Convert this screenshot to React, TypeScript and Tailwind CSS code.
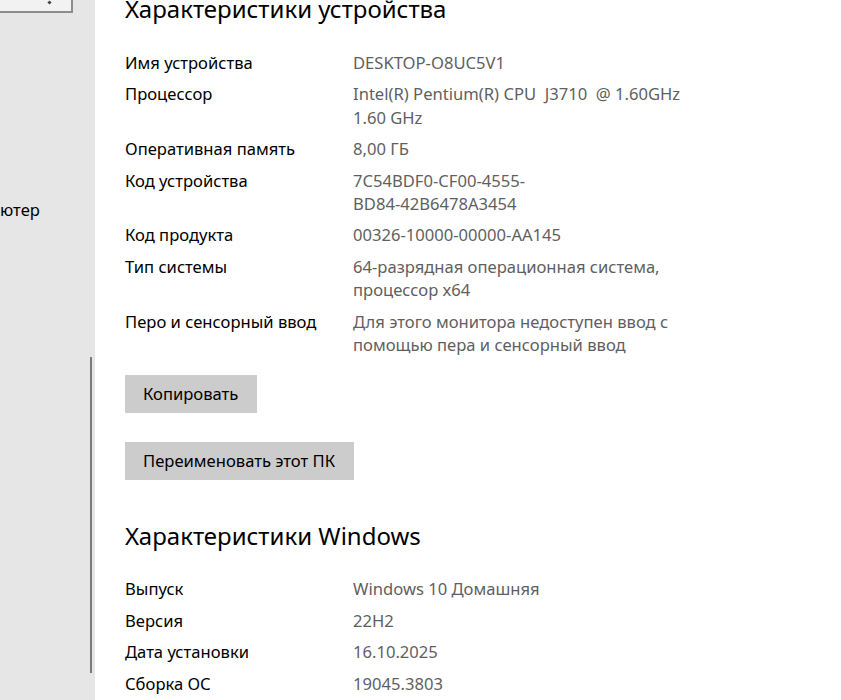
import React from "react";

const device: [string, string[]][] = [
  ["Имя устройства", ["DESKTOP-O8UC5V1"]],
  ["Процессор", ["Intel(R) Pentium(R) CPU  J3710  @ 1.60GHz", "1.60 GHz"]],
  ["Оперативная память", ["8,00 ГБ"]],
  ["Код устройства", ["7C54BDF0-CF00-4555-", "BD84-42B6478A3454"]],
  ["Код продукта", ["00326-10000-00000-AA145"]],
  ["Тип системы", ["64-разрядная операционная система,", "процессор x64"]],
  ["Перо и сенсорный ввод", ["Для этого монитора недоступен ввод с", "помощью пера и сенсорный ввод"]],
];

const windows: [string, string[]][] = [
  ["Выпуск", ["Windows 10 Домашняя"]],
  ["Версия", ["22H2"]],
  ["Дата установки", ["16.10.2025"]],
  ["Сборка ОС", ["19045.3803"]],
];

function Rows({ rows }: { rows: [string, string[]][] }) {
  return (
    <div className="flex flex-col gap-[8px]">
      {rows.map(([label, vals]) => (
        <div key={label} className="flex text-[16.6px] leading-[23.4px]">
          <div className="w-[228px] shrink-0 text-[#000]">{label}</div>
          <div className="text-[#5f5f5f] whitespace-pre">
            {vals.map((v) => (
              <div key={v}>{v}</div>
            ))}
          </div>
        </div>
      ))}
    </div>
  );
}

export default function App() {
  return (
    <div
      className="flex w-[841px] h-[700px] overflow-hidden bg-white"
      style={{ fontFamily: '"Noto Sans", "Open Sans", sans-serif' }}
    >
      <aside className="relative w-[95px] shrink-0 bg-[#e6e6e6]">
        <div className="absolute left-[-4px] top-[-30px] w-[77px] h-[43px] border-2 border-[#8c8c8c] bg-[#f2f2f2]">
          <div className="absolute left-[50px] bottom-[7px] w-[3px] h-[3px] bg-[#444] rotate-45" />
        </div>
        <div className="absolute left-[0px] top-[198px] text-[16.6px] leading-[23px] text-black">ютер</div>
        <div className="absolute left-[90px] top-[357px] w-[2px] h-[316px] bg-[#7a7a7a]" />
      </aside>
      <main className="flex-1 pl-[30px]">
        <h1 className="mt-[-7px] text-[24px] leading-[32px] font-normal text-black mb-[26px]">
          Характеристики устройства
        </h1>
        <Rows rows={device} />
        <div className="mt-[19px] flex flex-col items-start gap-[29px]">
          <button className="h-[38px] pl-[18px] pr-[19px] bg-[#cccccc] text-[16.6px] text-black">Копировать</button>
          <button className="h-[38px] pl-[18px] pr-[19px] bg-[#cccccc] text-[16.6px] text-black">Переименовать этот ПК</button>
        </div>
        <h2 className="mt-[40px] text-[24px] leading-[32px] font-normal text-black mb-[25px]">
          Характеристики Windows
        </h2>
        <Rows rows={windows} />
      </main>
    </div>
  );
}
